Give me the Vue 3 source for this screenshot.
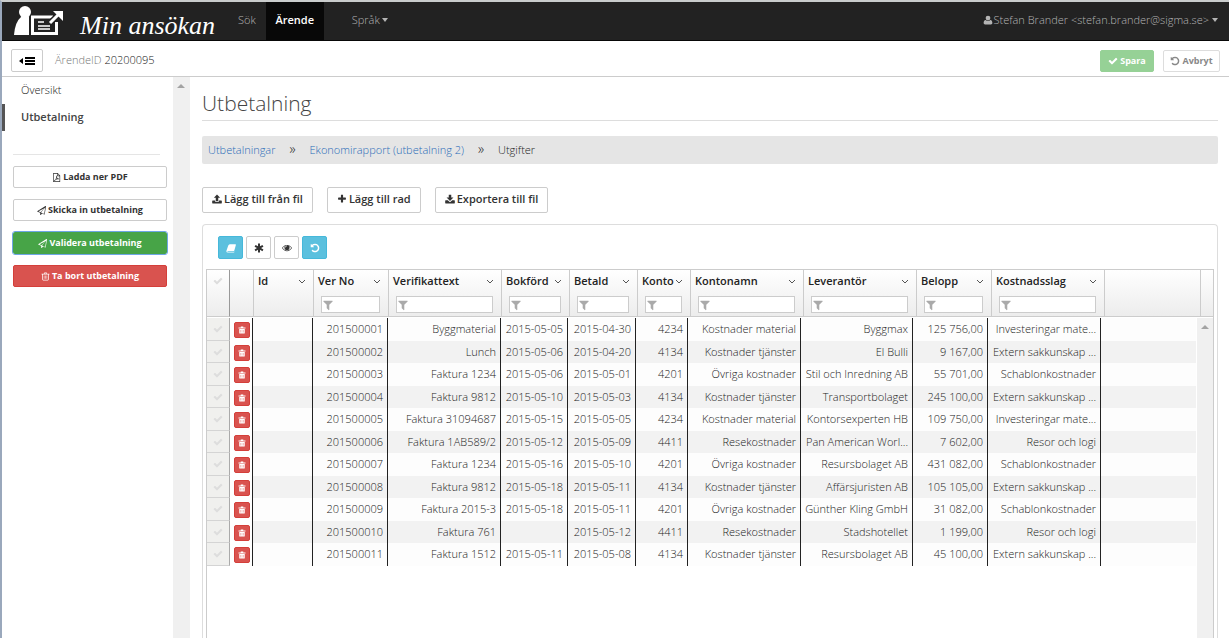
<script setup>
import { ref } from 'vue'

const icons = {
  check: { box: '0 0 1792 1792', d: 'M1671 566q0 40-28 68l-724 724-136 136q-28 28-68 28t-68-28l-136-136-362-362q-28-28-28-68t28-68l136-136q28-28 68-28t68 28l294 295 656-657q28-28 68-28t68 28l136 136q28 28 28 68z' },
  undo: { box: '0 0 1792 1792', d: 'M1664 896q0 156-61 298t-164 245-245 164-298 61q-172 0-327-72.500t-264-204.500q-7-10-6.500-22.500t8.500-20.500l137-138q10-9 25-9 16 2 23 12 73 95 179 147t225 52q104 0 198.500-40.500t163.500-109.500 109.500-163.500 40.500-198.500-40.500-198.500-109.500-163.500-163.500-109.500-198.500-40.500q-98 0-188 35.500t-160 101.500l137 138q31 30 14 69-17 40-59 40h-448q-26 0-45-19t-19-45v-448q0-42 40-59 39-17 69 14l130 129q107-101 244.500-156.500t284.500-55.500q156 0 298 61t245 164 164 245 61 298z' },
  filter: { box: '0 0 1792 1792', d: 'M1595 295q17 41-14 70l-493 493v742q0 42-39 59-13 5-25 5-27 0-45-19l-256-256q-19-19-19-45v-486l-493-493q-31-29-14-70 17-39 59-39h1280q42 0 59 39z' },
  plus: { box: '0 0 1792 1792', d: 'M1600 736v192q0 40-28 68t-68 28h-416v416q0 40-28 68t-68 28h-192q-40 0-68-28t-28-68v-416h-416q-40 0-68-28t-28-68v-192q0-40 28-68t68-28h416v-416q0-40 28-68t68-28h192q40 0 68 28t28 68v416h416q40 0 68 28t28 68z' },
  user: { box: '0 0 16 16', d: 'M8 1a3.800 3.800 0 0 1 3.800 3.800A3.800 3.800 0 0 1 8 8.700 3.800 3.800 0 0 1 4.200 4.800 3.800 3.800 0 0 1 8 1zM4.300 7.900C5.300 9 6.500 9.700 8 9.700s2.700-.7 3.700-1.800c2.400.3 3.300 2.300 3.300 4.900 0 1.400-1 2.200-2.300 2.200H3.300C2 15 1 14.200 1 12.800c0-2.600.9-4.600 3.300-4.900z' },
  trash: { box: '0 0 16 16', d: 'M6 1h4l1 2h4v1.400h-1.200V13q0 2-1.800 2H4q-1.800 0-1.800-2V4.400H1V3h4zm.6 1.100L6.200 3h3.600l-.4-.9zM3.500 4.400V13q0 .8.700.8h7.600q.7 0 .7-.8V4.400zM5 6h1v6H5zm2.500 0h1v6h-1zM10 6h1v6h-1z' },
  trashSolid: { box: '0 0 16 16', d: 'M5.500 1h5v2H15v2H1V3h4.500zM2.500 6h11v8q0 1-1 1h-9q-1 0-1-1z' },
  upload: { box: '0 0 16 16', d: 'M8 .8 13 6H10v5H6V6H3zM1 10.500h4V12q0 .5.500.5h5q.5 0 .5-.5v-1.500h4q.7 0 .7.7v3.100q0 .7-.7.7H1q-.7 0-.7-.7v-3.100q0-.7.7-.7z' },
  download: { box: '0 0 16 16', d: 'M6 1h4v4.500h3.500L8 11 2.500 5.500H6zM1 10h3.500L7 12.500q1 .8 2 0L11.500 10H15q.7 0 .7.700v3.600q0 .7-.7.7H1q-.7 0-.7-.7v-3.600Q.3 10 1 10z' },
  plane: { box: '0 0 16 16', d: 'M15.700.1q.4.2.3.7l-2.300 13.700q-.2.7-.9.500L8.900 13.400 6.800 15.800q-.6.500-1.100-.1V12L1 10.200q-1-.5-.1-1.200L15 .1q.4-.2.700 0zM2.700 9.500l3.500 1.400 7.100-7zM7 11.700l5.700 2.300 1.900-11.400z' },
  pdf: { box: '0 0 16 16', d: 'M2 0h8l4.500 4.500V16H2zM3.200 1.200v13.600h10.100V5.700H9V1.200zm6.900.4v3H13zM7 5h1.200c.4 2.400 1 3.700 2.300 4.700l2 .1v1.300h-2.300l-3.600.7-1.500 2.200H4v-1l2-1.600L7.500 8zm.8 4.200-.7 1.500 1.700-.3z' },
  book: { box: '0 0 16 16', d: 'M6 1.800h9q1.200.2.800 1.500l-2.500 8.700q-.4 1-1.300 1H3q-.9 0-1.100.6-.1.800 1.200.8h9.200l.6-.5h1q-.6 1.300-1.600 1.300H3q-2.700-.3-2.400-2.500L3.600 4q.8-2 2.400-2.200z' },
  asterisk: { box: '0 0 16 16', d: 'M6.400.8h3.200v4.500l3.900-2.300L15.100 5.800 11.200 8l3.900 2.200-1.600 2.800-3.900-2.300v4.500H6.400v-4.500L2.500 13 .9 10.200 4.800 8 .9 5.800 2.500 3l3.900 2.300z' },
  eye: { box: '0 0 16 16', d: 'M8 3c3.300 0 6 1.900 8 5-2 3.100-4.700 5-8 5S2 11.100 0 8c2-3.100 4.700-5 8-5zM4.600 4.900C3.200 5.600 2.100 6.700 1.200 8c1.600 2.500 4 3.900 6.800 3.900s5.200-1.400 6.800-3.900c-.9-1.300-2-2.400-3.400-3.100.5.7.7 1.400.7 2.200A4.100 4.100 0 0 1 8 11.200a4.100 4.100 0 0 1-4.100-4.100c0-.8.2-1.500.7-2.200zM8 4.100a3 3 0 0 0-3 3h.9A2.100 2.100 0 0 1 8 5z' },
  collapse: { box: '0 0 16 10', d: 'M4 2v6L0 5zM6 1h10v2H6zm0 3h10v2H6zm0 3h10v2H6z' }
}

const columns = [
  { name: 'Id', key: 'id', filter: false },
  { name: 'Ver No', key: 'ver', filter: true },
  { name: 'Verifikattext', key: 'text', filter: true },
  { name: 'Bokförd', key: 'booked', filter: true },
  { name: 'Betald', key: 'paid', filter: true },
  { name: 'Konto', key: 'account', filter: true },
  { name: 'Kontonamn', key: 'accountName', filter: true },
  { name: 'Leverantör', key: 'supplier', filter: true },
  { name: 'Belopp', key: 'amount', filter: true },
  { name: 'Kostnadsslag', key: 'kind', filter: true }
]

const material = ['4234', 'Kostnader material', 'Investeringar mate...']
const service = ['4134', 'Kostnader tjänster', 'Extern sakkunskap ...']
const other = ['4201', 'Övriga kostnader', 'Schablonkostnader']
const travel = ['4411', 'Resekostnader', 'Resor och logi']

const rows = [
  ['Byggmaterial', '2015-05-05', '2015-04-30', material, 'Byggmax', '125 756,00'],
  ['Lunch', '2015-05-06', '2015-04-20', service, 'El Bulli', '9 167,00'],
  ['Faktura 1234', '2015-05-06', '2015-05-01', other, 'Stil och Inredning AB', '55 701,00'],
  ['Faktura 9812', '2015-05-10', '2015-05-03', service, 'Transportbolaget', '245 100,00'],
  ['Faktura 31094687', '2015-05-15', '2015-05-05', material, 'Kontorsexperten HB', '109 750,00'],
  ['Faktura 1AB589/2', '2015-05-12', '2015-05-09', travel, 'Pan American Worl...', '7 602,00'],
  ['Faktura 1234', '2015-05-16', '2015-05-10', other, 'Resursbolaget AB', '431 082,00'],
  ['Faktura 9812', '2015-05-18', '2015-05-11', service, 'Affärsjuristen AB', '105 105,00'],
  ['Faktura 2015-3', '2015-05-18', '2015-05-11', other, 'Günther Kling GmbH', '31 082,00'],
  ['Faktura 761', '', '2015-05-12', travel, 'Stadshotellet', '1 199,00'],
  ['Faktura 1512', '2015-05-11', '2015-05-08', service, 'Resursbolaget AB', '45 100,00']
].map(([text, booked, paid, type, supplier, amount], i) => ({
  id: '',
  ver: String(201500001 + i),
  text,
  booked,
  paid,
  account: type[0],
  accountName: type[1],
  supplier,
  amount,
  kind: type[2]
}))

const filters = ref({})
</script>

<template>
  <div class="page">
    <header class="navbar">
      <a class="brand" href="#">
        <svg class="logo" viewBox="0 0 50 32" aria-hidden="true">
          <circle cx="11" cy="7" r="6" fill="#fff" />
          <path d="M0 30Q1 17 7 12H15V30z" fill="#fff" />
          <path d="M39 12H18.500V28.500H42.500V17" fill="none" stroke="#fff" stroke-width="3" />
          <path d="M24 17h6M24 21h12M24 24h12" stroke="#fff" stroke-width="1.500" />
          <path d="M36 18 45 9" stroke="#222" stroke-width="6" />
          <path d="M36 18 46 8" stroke="#fff" stroke-width="3" />
          <path d="M39 6H49V16z" fill="#fff" />
        </svg>
        <span class="brand-name">Min ansökan</span>
      </a>
      <nav class="nav">
        <a class="nav-link" href="#">Sök</a>
        <a class="nav-link active" href="#">Ärende</a>
        <button class="nav-link lang" type="button">Språk<span class="caret"></span></button>
      </nav>
      <button class="nav-link account" type="button">
        <svg class="icon" :viewBox="icons.user.box"><path :d="icons.user.d" /></svg>
        Stefan Brander &lt;stefan.brander@sigma.se&gt;<span class="caret"></span>
      </button>
    </header>

    <div class="casebar">
      <button class="btn toggle" type="button" aria-label="Visa eller dölj meny">
        <svg class="icon-wide" :viewBox="icons.collapse.box"><path :d="icons.collapse.d" /></svg>
      </button>
      <span class="case"><span class="muted">ÄrendeID</span> 20200095</span>
      <button class="btn save" type="button" disabled>
        <svg class="icon" :viewBox="icons.check.box"><path :d="icons.check.d" /></svg>Spara
      </button>
      <button class="btn cancel" type="button" disabled>
        <svg class="icon" :viewBox="icons.undo.box"><path :d="icons.undo.d" /></svg>Avbryt
      </button>
    </div>

    <div class="body">
      <aside class="sidebar">
        <nav class="side-nav">
          <a href="#">Översikt</a>
          <a href="#" class="current">Utbetalning</a>
        </nav>
        <hr />
        <div class="side-actions">
          <button class="btn" type="button"><svg class="icon" :viewBox="icons.pdf.box"><path :d="icons.pdf.d" /></svg>Ladda ner PDF</button>
          <button class="btn" type="button"><svg class="icon" :viewBox="icons.plane.box"><path :d="icons.plane.d" /></svg>Skicka in utbetalning</button>
          <button class="btn success" type="button"><svg class="icon" :viewBox="icons.plane.box"><path :d="icons.plane.d" /></svg>Validera utbetalning</button>
          <button class="btn danger" type="button"><svg class="icon" :viewBox="icons.trash.box"><path :d="icons.trash.d" /></svg>Ta bort utbetalning</button>
        </div>
      </aside>
      <div class="scroll"><span class="up"></span></div>

      <main class="main">
        <h1>Utbetalning</h1>
        <nav class="crumbs">
          <a href="#">Utbetalningar</a><span>»</span>
          <a href="#">Ekonomirapport (utbetalning 2)</a><span>»</span>
          <b>Utgifter</b>
        </nav>
        <div class="actions">
          <button class="btn" type="button"><svg class="icon" :viewBox="icons.upload.box"><path :d="icons.upload.d" /></svg>Lägg till från fil</button>
          <button class="btn" type="button"><svg class="icon" :viewBox="icons.plus.box"><path :d="icons.plus.d" /></svg>Lägg till rad</button>
          <button class="btn" type="button"><svg class="icon" :viewBox="icons.download.box"><path :d="icons.download.d" /></svg>Exportera till fil</button>
        </div>

        <section class="panel">
          <div class="tools">
            <button class="btn info" type="button" aria-label="Spara vy"><svg class="icon" :viewBox="icons.book.box"><path :d="icons.book.d" /></svg></button>
            <button class="btn" type="button" aria-label="Markera"><svg class="icon" :viewBox="icons.asterisk.box"><path :d="icons.asterisk.d" /></svg></button>
            <button class="btn" type="button" aria-label="Visa kolumner"><svg class="icon" :viewBox="icons.eye.box"><path :d="icons.eye.d" /></svg></button>
            <button class="btn info" type="button" aria-label="Återställ"><svg class="icon" :viewBox="icons.undo.box"><path :d="icons.undo.d" /></svg></button>
          </div>

          <div class="grid">
            <table class="head">
              <colgroup>
                <col class="c-check" /><col class="c-del" />
                <col v-for="c in columns" :key="c.key" :class="'c-' + c.key" />
                <col /><col class="c-bar" />
              </colgroup>
              <thead>
                <tr>
                  <th class="dark"><svg class="icon tick" :viewBox="icons.check.box"><path :d="icons.check.d" /></svg></th>
                  <th></th>
                  <th v-for="c in columns" :key="c.key">
                    <div class="title">
                      <span>{{ c.name }}</span>
                      <button type="button" :aria-label="'Meny för ' + c.name">
                        <svg viewBox="0 0 8 5"><path d="M1 1 4 4 7 1" fill="none" stroke="#555" /></svg>
                      </button>
                    </div>
                    <label v-if="c.filter" class="filter">
                      <svg class="icon" :viewBox="icons.filter.box"><path :d="icons.filter.d" /></svg>
                      <input v-model="filters[c.key]" type="text" :aria-label="'Filtrera ' + c.name" />
                    </label>
                  </th>
                  <th></th>
                  <th></th>
                </tr>
              </thead>
            </table>
            <div class="viewport">
              <div class="canvas">
                <table class="rows">
                  <colgroup>
                    <col class="c-check" /><col class="c-del" />
                    <col v-for="c in columns" :key="c.key" :class="'c-' + c.key" />
                    <col />
                  </colgroup>
                  <tbody>
                    <tr v-for="r in rows" :key="r.ver">
                      <td class="sel"><svg class="icon tick" :viewBox="icons.check.box"><path :d="icons.check.d" /></svg></td>
                      <td class="del">
                        <button type="button" :aria-label="'Ta bort ' + r.ver"><svg :viewBox="icons.trashSolid.box"><path :d="icons.trashSolid.d" /><path d="M5 8h1v5H5zm2.500 0h1v5h-1zM10 8h1v5h-1z" fill="#e58a87" /></svg></button>
                      </td>
                      <td v-for="c in columns" :key="c.key" class="cell">{{ r[c.key] }}</td>
                      <td></td>
                    </tr>
                  </tbody>
                </table>
              </div>
              <div class="scroll"><span class="up"></span></div>
            </div>
          </div>
        </section>
      </main>
    </div>
  </div>
</template>

<style>
body {
  background: #fff;
}
</style>

<style scoped>
* {
  box-sizing: border-box;
}
.page {
  display: flex;
  flex-direction: column;
  height: 100vh;
  overflow: hidden;
  border-left: 2px solid #9aa8bc;
  border-top: 2px solid #c9cccc;
  font: 300 11px/16px "Open Sans", "Noto Sans", sans-serif;
  color: #222;
}
button,
input {
  font: inherit;
  color: inherit;
}
.icon {
  width: 10px;
  height: 10px;
  fill: currentColor;
  flex: none;
}
.caret {
  border: 3px solid transparent;
  border-top: 4px solid currentColor;
  border-bottom: 0;
  margin-left: 2px;
}

.navbar {
  display: flex;
  flex: none;
  height: 39px;
  background: #222;
  border-bottom: 1px solid #080808;
}
.brand {
  display: flex;
  width: 226px;
  padding-left: 12px;
  gap: 16px;
  color: #fff;
  text-decoration: none;
}
.logo {
  width: 50px;
  height: 32px;
  margin-top: 3px;
}
.brand-name {
  font: italic 26px/48px "Liberation Serif", serif;
  white-space: nowrap;
}
.nav {
  display: flex;
}
.nav-link {
  display: flex;
  align-items: center;
  padding: 0 10px 2px;
  color: #b4b4b4;
  background: none;
  border: 0;
  text-decoration: none;
  white-space: nowrap;
}
.nav-link.active {
  width: 58px;
  justify-content: center;
  color: #fff;
  font-weight: 600;
  background: #080808;
}
.nav-link.lang {
  margin-left: 18px;
}
.nav-link.account {
  margin-left: auto;
  padding-right: 11px;
  gap: 1px;
}

.btn {
  display: inline-flex;
  align-items: center;
  justify-content: center;
  gap: 2px;
  padding: 0 8px;
  border: 1px solid #ccc;
  border-radius: 2px;
  background: #fff;
  color: #333;
  font-weight: 600;
  white-space: nowrap;
}
.casebar {
  display: flex;
  flex: none;
  align-items: center;
  height: 36px;
  padding: 4px 9px 0;
  border-bottom: 1px solid #ccc;
}
.toggle {
  width: 32px;
  height: 23px;
}
.icon-wide {
  width: 16px;
  height: 10px;
  flex: none;
}
.case {
  margin: 0 auto 2px 12px;
}
.muted {
  color: #777;
}
.save {
  width: 54px;
  height: 22px;
  background: #96d196;
  border-color: #96d196;
  color: #fff;
  font-size: 9px;
  font-weight: 700;
}
.cancel {
  width: 57px;
  height: 22px;
  margin-left: 9px;
  color: #888;
  border-color: #ddd;
  font-size: 9px;
  font-weight: 700;
}

.body {
  display: flex;
  flex: 1;
  min-height: 0;
}
.sidebar {
  flex: none;
  width: 171px;
}
.side-nav a {
  display: block;
  height: 27px;
  padding-left: 16px;
  border-left: 3px solid transparent;
  line-height: 26px;
  color: #222;
  text-decoration: none;
}
.side-nav a.current {
  border-color: #555;
  color: #444;
  font-weight: 600;
}
hr {
  margin: 23px 13px 11px 11px;
  border: 0;
  border-top: 1px solid #e5e5e5;
}
.side-actions {
  display: grid;
  gap: 11px;
  padding: 0 6px 0 11px;
}
.side-actions .btn {
  height: 22px;
  font-size: 9px;
  font-weight: 700;
}
.side-actions .icon {
  width: 9px;
  height: 9px;
}
.side-actions .btn.success {
  background: #47a447;
  border-color: #47a447;
  outline: 1px solid #6ea6e4;
  color: #fff;
}
.side-actions .btn.danger {
  background: #d9534f;
  border-color: #d43f3a;
  color: #fff;
}
.scroll {
  flex: none;
  width: 17px;
  padding: 7px 4px;
  background: #f0f0f0;
}
.up {
  display: block;
  width: 0;
  border: 4px solid transparent;
  border-top: 0;
  border-bottom: 4px solid #a3a3a3;
}

.main {
  display: flex;
  flex: 1;
  flex-direction: column;
  min-width: 0;
  padding: 12px 11px 0 12px;
}
h1 {
  margin: 0 0 15px;
  padding-bottom: 2px;
  border-bottom: 1px solid #ddd;
  font-size: 21px;
  line-height: 29px;
  font-weight: 300;
  color: #444;
}
.crumbs {
  display: flex;
  align-items: center;
  height: 28px;
  padding-left: 6px;
  background: #e5e5e5;
  border-radius: 2px;
}
.crumbs a {
  color: #2a6cb8;
  text-decoration: none;
}
.crumbs b {
  font-weight: 300;
}
.crumbs span {
  width: 34px;
  padding-bottom: 2px;
  text-align: center;
  font-size: 14px;
  font-weight: 300;
}
.actions {
  display: flex;
  gap: 14px;
  margin: 23px 0 11px;
}
.actions .btn {
  height: 26px;
  padding: 0 9px 2px;
}
.panel {
  display: flex;
  flex: 1;
  flex-direction: column;
  min-height: 0;
  padding: 11px 3px 0;
  border: 1px solid #ddd;
  border-bottom: 0;
  border-radius: 4px 4px 0 0;
}
.tools {
  display: flex;
  gap: 3px;
  padding: 0 12px 10px;
}
.tools .btn {
  width: 25px;
  height: 23px;
  padding: 0;
}
.tools .btn.info {
  background: #5bc0de;
  border-color: #46b8da;
  color: #fff;
}

.grid {
  display: flex;
  flex: 1;
  flex-direction: column;
  min-height: 0;
  border: 1px solid #ccc;
  border-bottom: 0;
}
table {
  width: 100%;
  table-layout: fixed;
  border-collapse: separate;
  border-spacing: 0;
}
.c-check { width: 23px; }
.c-del { width: 24px; }
.c-id { width: 60px; }
.c-ver { width: 75px; }
.c-text { width: 113px; }
.c-booked { width: 68px; }
.c-paid { width: 68px; }
.c-account { width: 53px; }
.c-accountName { width: 113px; }
.c-supplier { width: 113px; }
.c-amount { width: 75px; }
.c-kind { width: 113px; }
.c-bar { width: 12px; }
.rows .c-del { width: 23px; }
.rows .c-booked { width: 67px; }
.rows .c-account { width: 52px; }
.rows .c-supplier { width: 112px; }

th {
  height: 47px;
  padding: 0;
  vertical-align: top;
  border-right: 1px solid #ccc;
  border-bottom: 1px solid #ccc;
  font-weight: 600;
  color: #222;
  text-align: left;
}
th:last-child {
  border-right: 0;
}
th.dark {
  border-right-color: #999;
}
.head {
  flex: none;
  background: linear-gradient(#fff, #ececec);
}
.tick {
  display: block;
  margin: 6px auto 0;
  fill: #ddd;
}
.title {
  display: flex;
  align-items: center;
  justify-content: space-between;
  height: 22px;
  padding: 0 7px 0 4px;
}
.title button {
  flex: none;
  display: flex;
  padding: 0;
  border: 0;
  background: none;
}
.title svg {
  width: 8px;
  height: 5px;
}
.filter {
  display: flex;
  align-items: center;
  height: 17px;
  margin: 4px 8px 0 7px;
  border: 1px solid #ccc;
  background: #fff;
  color: #aaa;
}
.filter .icon {
  width: 12px;
  height: 12px;
}
.filter input {
  width: 100%;
  min-width: 0;
  height: 15px;
  padding: 0 2px;
  border: 0;
  background: none;
}

.viewport {
  display: flex;
  flex: 1;
  min-height: 0;
  padding-top: 1px;
  overflow: hidden;
}
.canvas {
  flex: 1;
  min-width: 0;
}
.viewport .scroll {
  width: 16px;
  margin-left: 1px;
}
.rows tr {
  height: 23px;
  background: #fdfdfd;
}
.rows tr:nth-child(even) {
  height: 22px;
  background: #f2f2f2;
}
.rows td {
  padding: 0;
  vertical-align: top;
}
.rows .sel {
  background: #f0f0ee;
  border-right: 1px solid #aaa;
  border-bottom: 1px solid #d4d4d4;
}
.rows .cell,
.rows .del {
  border-right: 1px solid #222;
}
.rows .del {
  background: #fff;
}
.del button {
  display: flex;
  align-items: center;
  justify-content: center;
  width: 16px;
  height: 16px;
  margin: 4px 0 0 4px;
  padding: 0;
  border: 1px solid #d43f3a;
  border-radius: 2px;
  background: #d9534f;
}
.del svg {
  width: 8px;
  height: 8px;
  fill: #fff;
}
.rows .cell {
  padding: 0 4px 0 2px;
  line-height: 22px;
  text-align: right;
  white-space: nowrap;
  overflow: hidden;
}
</style>
